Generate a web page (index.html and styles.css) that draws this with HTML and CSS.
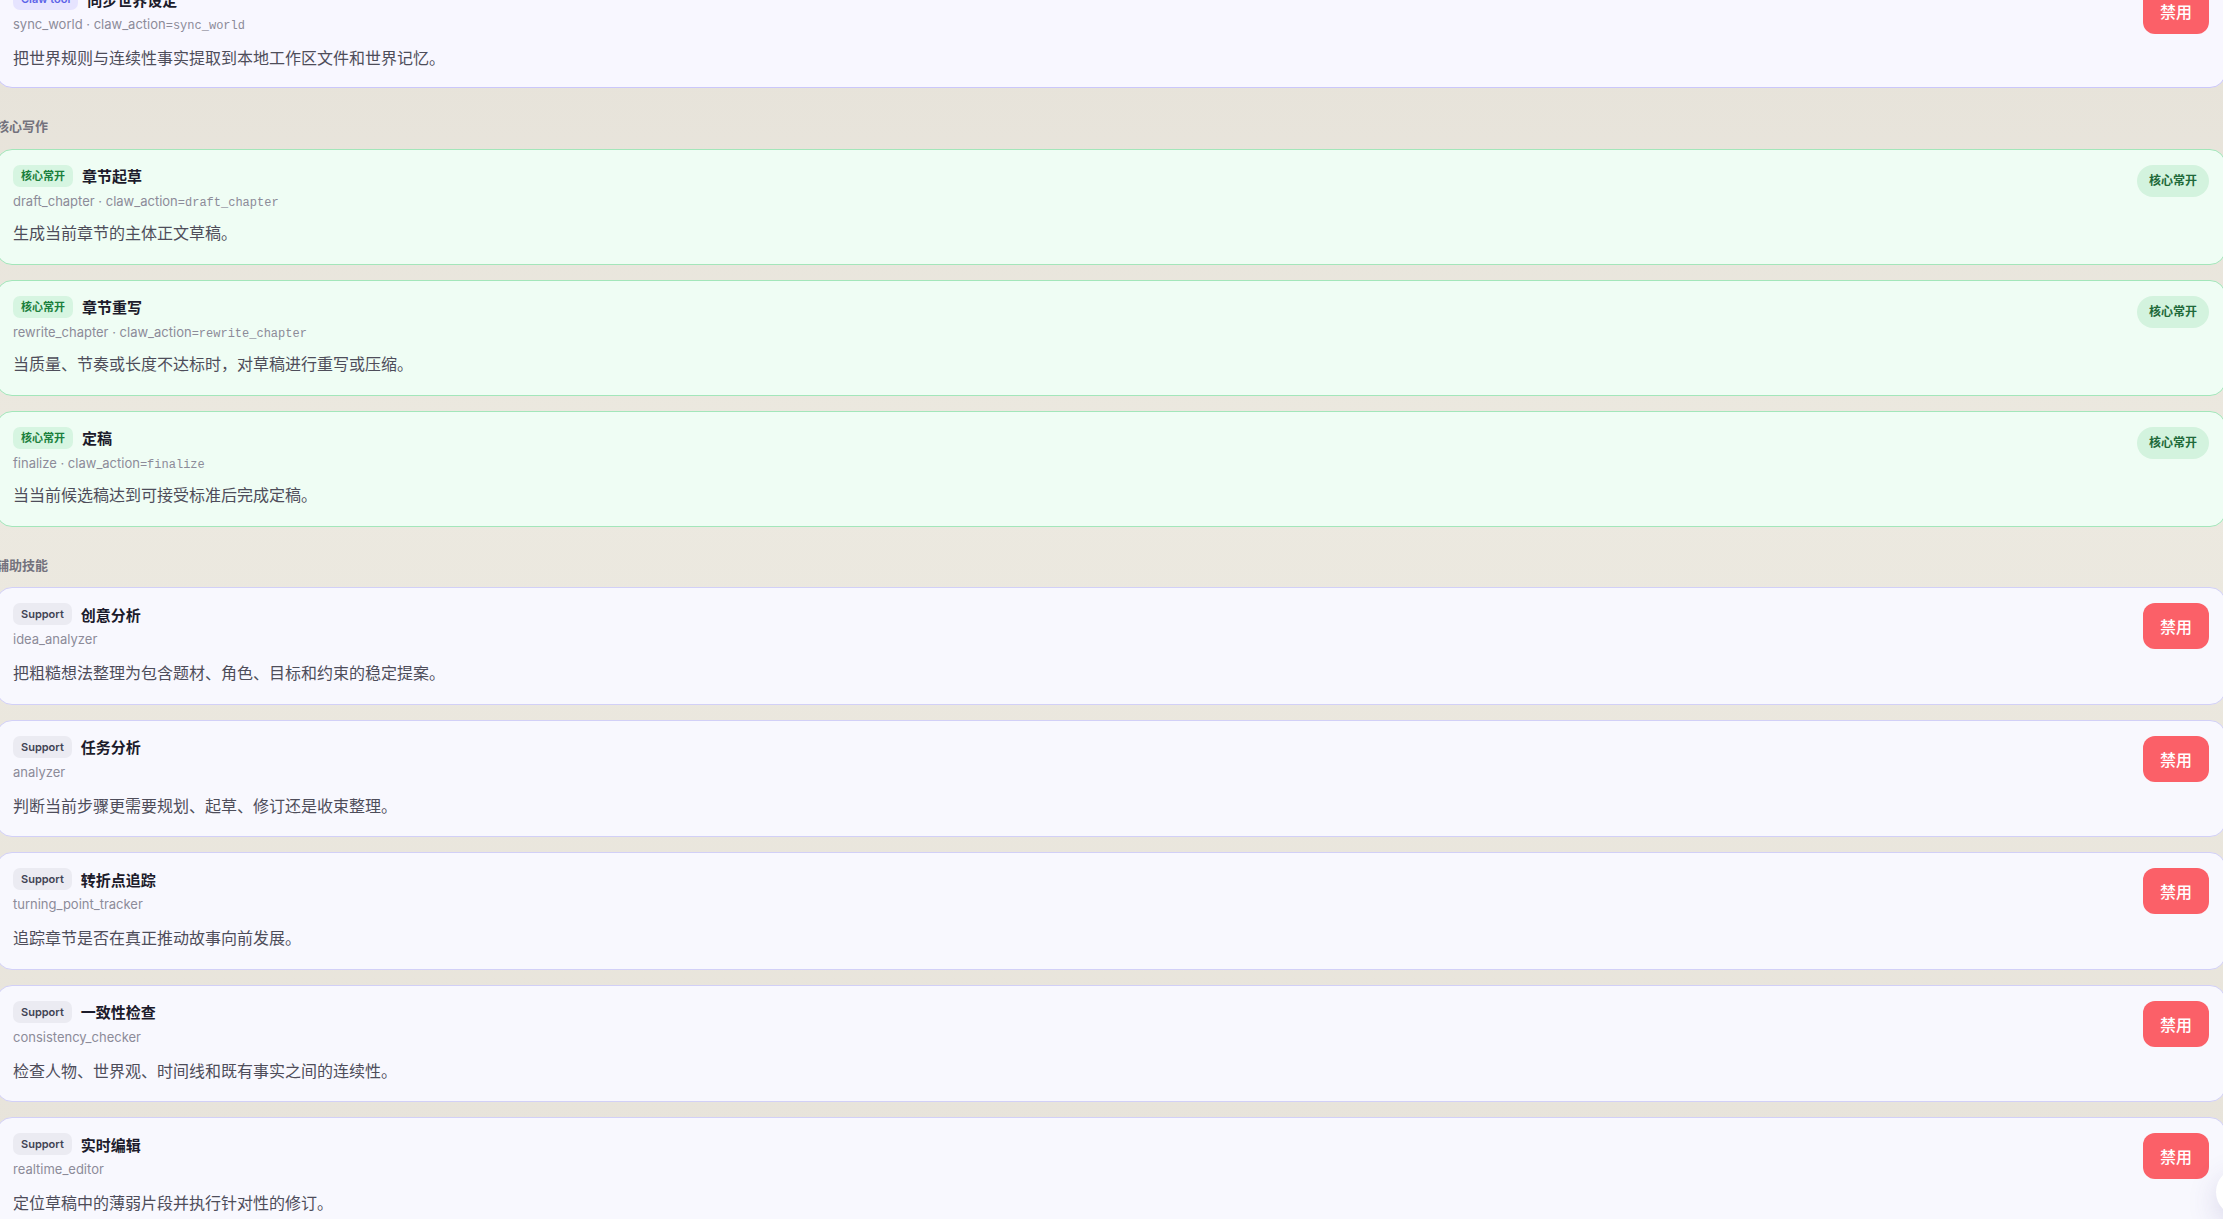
FILE: index.html
```html
<!DOCTYPE html>
<html lang="zh-CN">
<head>
    <meta charset="UTF-8">
    <meta name="viewport" content="width=device-width, initial-scale=1.0">
    <title>技能管理</title>
    <link rel="stylesheet" href="styles.css">
</head>
<body>

    <div class="page">

        <!-- Claw tools -->
        <section class="group">
            <div class="card-list">
                <div class="card card-claw">
                    <div class="card-info">
                        <div class="card-head">
                            <span class="badge badge-claw">Claw tool</span>
                            <h4 class="card-title">同步世界设定</h4>
                        </div>
                        <div class="card-meta">sync_world · claw_action<code>=sync_world</code></div>
                        <p class="card-desc">把世界规则与连续性事实提取到本地工作区文件和世界记忆。</p>
                    </div>
                    <button class="btn-disable">禁用</button>
                </div>
            </div>
        </section>

        <!-- Core writing -->
        <section class="group">
            <h3 class="group-title">核心写作</h3>
            <div class="card-list">
                <div class="card card-core">
                    <div class="card-info">
                        <div class="card-head">
                            <span class="badge badge-core">核心常开</span>
                            <h4 class="card-title">章节起草</h4>
                        </div>
                        <div class="card-meta">draft_chapter · claw_action<code>=draft_chapter</code></div>
                        <p class="card-desc">生成当前章节的主体正文草稿。</p>
                    </div>
                    <span class="pill">核心常开</span>
                </div>
                <div class="card card-core">
                    <div class="card-info">
                        <div class="card-head">
                            <span class="badge badge-core">核心常开</span>
                            <h4 class="card-title">章节重写</h4>
                        </div>
                        <div class="card-meta">rewrite_chapter · claw_action<code>=rewrite_chapter</code></div>
                        <p class="card-desc">当质量、节奏或长度不达标时，对草稿进行重写或压缩。</p>
                    </div>
                    <span class="pill">核心常开</span>
                </div>
                <div class="card card-core">
                    <div class="card-info">
                        <div class="card-head">
                            <span class="badge badge-core">核心常开</span>
                            <h4 class="card-title">定稿</h4>
                        </div>
                        <div class="card-meta">finalize · claw_action<code>=finalize</code></div>
                        <p class="card-desc">当当前候选稿达到可接受标准后完成定稿。</p>
                    </div>
                    <span class="pill">核心常开</span>
                </div>
            </div>
        </section>

        <!-- Support skills -->
        <section class="group">
            <h3 class="group-title">辅助技能</h3>
            <div class="card-list">
                <div class="card card-support">
                    <div class="card-info">
                        <div class="card-head">
                            <span class="badge badge-support">Support</span>
                            <h4 class="card-title">创意分析</h4>
                        </div>
                        <div class="card-meta">idea_analyzer</div>
                        <p class="card-desc">把粗糙想法整理为包含题材、角色、目标和约束的稳定提案。</p>
                    </div>
                    <button class="btn-disable">禁用</button>
                </div>
                <div class="card card-support">
                    <div class="card-info">
                        <div class="card-head">
                            <span class="badge badge-support">Support</span>
                            <h4 class="card-title">任务分析</h4>
                        </div>
                        <div class="card-meta">analyzer</div>
                        <p class="card-desc">判断当前步骤更需要规划、起草、修订还是收束整理。</p>
                    </div>
                    <button class="btn-disable">禁用</button>
                </div>
                <div class="card card-support">
                    <div class="card-info">
                        <div class="card-head">
                            <span class="badge badge-support">Support</span>
                            <h4 class="card-title">转折点追踪</h4>
                        </div>
                        <div class="card-meta">turning_point_tracker</div>
                        <p class="card-desc">追踪章节是否在真正推动故事向前发展。</p>
                    </div>
                    <button class="btn-disable">禁用</button>
                </div>
                <div class="card card-support">
                    <div class="card-info">
                        <div class="card-head">
                            <span class="badge badge-support">Support</span>
                            <h4 class="card-title">一致性检查</h4>
                        </div>
                        <div class="card-meta">consistency_checker</div>
                        <p class="card-desc">检查人物、世界观、时间线和既有事实之间的连续性。</p>
                    </div>
                    <button class="btn-disable">禁用</button>
                </div>
                <div class="card card-support">
                    <div class="card-info">
                        <div class="card-head">
                            <span class="badge badge-support">Support</span>
                            <h4 class="card-title">实时编辑</h4>
                        </div>
                        <div class="card-meta">realtime_editor</div>
                        <p class="card-desc">定位草稿中的薄弱片段并执行针对性的修订。</p>
                    </div>
                    <button class="btn-disable">禁用</button>
                </div>
            </div>
        </section>

    </div>

    <!-- Floating helper button -->
    <div class="fab"></div>

</body>
</html>
```

FILE: styles.css
```css
/* Page */
body {
    margin: 0;
    overflow: hidden;
    font-family: Inter, "Noto Sans CJK SC", sans-serif;
    background: linear-gradient(180deg, #e6e2d9 0%, #ece9e0 40%, #e7e3da 100%);
    background-attachment: fixed;
}

/* scrolled a little down and right */
.page {
    width: 2230px;
    margin: -28px 0 0 -4px;
}

/* Groups */
.group + .group {
    margin-top: 29px;
}

.group-title {
    margin: 0 0 13.5px;
    font-size: 13px;
    line-height: 18px;
    font-weight: 700;
    color: #73727d;
}

.card-list {
    display: flex;
    flex-direction: column;
    gap: 15px;
}

/* Cards */
.card {
    display: flex;
    justify-content: space-between;
    align-items: flex-start;
    gap: 16px;
    padding: 15px 16px 19px;
    border: 1px solid;
    border-radius: 16px;
}

.card-claw {
    background-color: #f8f7ff;
    border-color: #cbc7fa;
    padding-bottom: 17px;
}

.card-claw .card-desc {
    margin-top: 13px;
}

.card-core {
    background-color: #effdf4;
    border-color: #a3e6ba;
}

.card-support {
    background-color: #f8f8fe;
    border-color: #d2d0f7;
    padding-bottom: 18.5px;
}

.card-support .card-desc {
    margin-top: 13px;
}

.card-head {
    display: flex;
    align-items: center;
    gap: 9px;
    height: 22px;
}

.card-title {
    margin: 0;
    font-size: 15px;
    font-weight: 700;
    color: #1c1b2b;
}

.card-meta {
    height: 18px;
    margin-top: 5px;
    font-size: 13px;
    line-height: 18px;
    color: #8c8b99;
}

.card-meta code {
    font-family: "Liberation Mono", monospace;
    font-size: 12px;
    line-height: 1;
}

.card-desc {
    margin: 11px 0 0;
    font-size: 16px;
    line-height: 24px;
    color: #4e4d5a;
}

/* Badges */
.badge {
    display: inline-block;
    height: 22px;
    padding: 0 8px;
    border-radius: 7px;
    font-size: 11px;
    font-weight: 600;
    line-height: 22px;
}

.badge-claw {
    background-color: #e6e4ff;
    color: #5b63e8;
}

.badge-core {
    background-color: #d6f5e1;
    color: #1a7f3c;
    font-weight: 700;
}

.badge-support {
    background-color: #ebebf2;
    color: #414354;
}

/* Right side */
.pill {
    flex-shrink: 0;
    height: 32px;
    padding: 0 12px;
    border-radius: 16px;
    background-color: #d3f3de;
    color: #1f6a3a;
    font-size: 12px;
    font-weight: 700;
    line-height: 32px;
}

.btn-disable {
    flex-shrink: 0;
    height: 46px;
    padding: 0 17px;
    border: none;
    border-radius: 12px;
    background-color: #fb6068;
    color: #fff;
    font-family: inherit;
    font-size: 16px;
    font-weight: 500;
    cursor: pointer;
}

/* Floating button, mostly off screen */
.fab {
    position: fixed;
    right: -41px;
    bottom: 3px;
    width: 48px;
    height: 48px;
    border-radius: 50%;
    background-color: #fff;
    box-shadow: 0 10px 30px rgba(70, 60, 140, 0.18);
}
```
